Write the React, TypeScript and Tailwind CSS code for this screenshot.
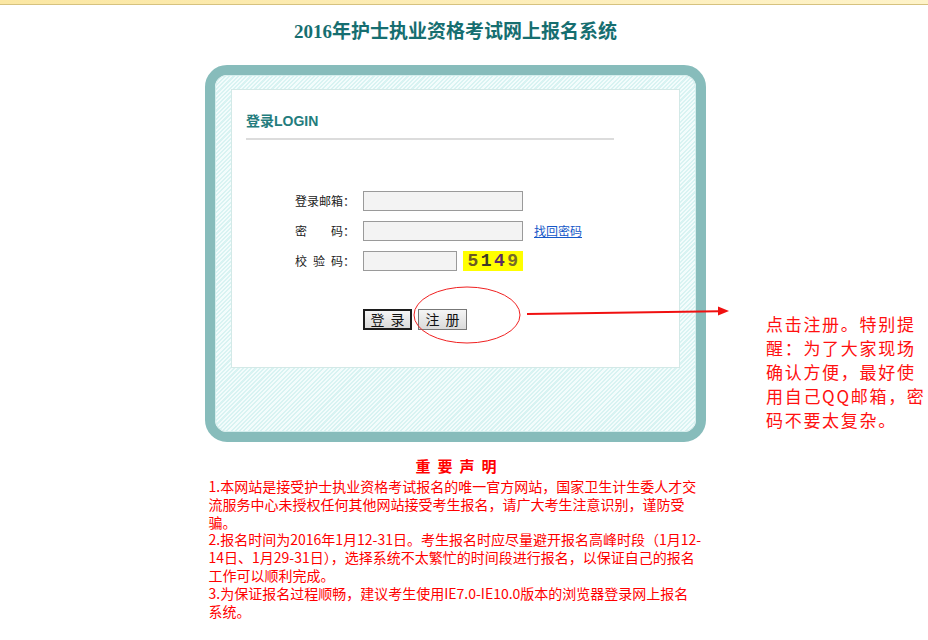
import React from "react"

const cjk = "font-['Noto_Sans_CJK_SC',sans-serif]"

function Row({ label, children }: { label: React.ReactNode; children: React.ReactNode }) {
  return (
    <div className="flex h-[20px] items-center">
      <div className="w-[68px] whitespace-pre text-[12px] leading-[20px] text-[#222]">{label}</div>
      {children}
    </div>
  )
}

function Annotation() {
  return (
    <>
      <svg className="pointer-events-none absolute left-0 top-0" width="928" height="640">
        <ellipse cx="467" cy="315" rx="53" ry="28" fill="none" stroke="#f02020" strokeWidth="1" />
        <line x1="527" y1="314" x2="719" y2="311.2" stroke="#f01010" strokeWidth="2" />
        <polygon points="718,306.5 729,311 718,315.5" fill="#f01010" />
      </svg>
      <div
        className={`absolute left-[766px] top-[312px] whitespace-nowrap text-[17px] leading-[24px] tracking-[1.7px] text-[#ff1010] ${cjk}`}
      >
        点击注册。特别提
        <br />
        醒：为了大家现场
        <br />
        确认方便，最好使
        <br />
        用自己QQ邮箱，密
        <br />
        码不要太复杂。
      </div>
    </>
  )
}

export default function App() {
  return (
    <div className={`relative min-h-[640px] w-[928px] overflow-hidden bg-white ${cjk}`}>
      <div className="h-[5px] border-b border-[#d6c27f] bg-[linear-gradient(90deg,#fbe7a3,#fdeebb_60%,#fef3c9)]" />

      <div className="flex w-[911px] flex-col items-center">
        <h1 className="mt-[13px] text-[19px] font-bold leading-[28px] text-[#166e70] font-['Liberation_Serif','Noto_Sans_CJK_SC',serif]">
          2016年护士执业资格考试网上报名系统
        </h1>

        {/* login panel */}
        <div className="mt-[19px] w-[501px] rounded-[22px] border-[10px] border-[#87bcbb]">
          <div className="rounded-[12px] border border-[#d4eeed] bg-[repeating-linear-gradient(135deg,#d8f3f2_0px,#d8f3f2_1.5px,#f3fcfc_1.5px,#f3fcfc_3px)] px-[15px] pb-[63px] pt-[13px]">
            <div className="h-[279px] border border-[#d3e9e7] bg-white">
              <div className="pl-[14px] pt-[20px]">
                <div className="text-[14px] font-bold leading-[20px] text-[#237c7d]">
                  登录<span className="font-['Liberation_Sans',sans-serif]">LOGIN</span>
                </div>
                <div className="mt-[7px] h-[2px] w-[368px] bg-[#dcdcdc]" />
              </div>

              <div className="mt-[51px] flex flex-col gap-[10px] pl-[63px]">
                <Row label="登录邮箱：">
                  <input className="h-[20px] w-[160px] border border-[#9a9a9a] bg-[#f3f3f3] outline-none" />
                </Row>
                <Row label="密　　码：">
                  <input type="password" className="h-[20px] w-[160px] border border-[#9a9a9a] bg-[#f3f3f3] outline-none" />
                  <a href="#" className="ml-[11px] text-[12px] leading-[20px] text-[#1558c8] underline">
                    找回密码
                  </a>
                </Row>
                <Row
                  label={
                    <>
                      <span className="mr-[6px]">校</span>
                      <span className="mr-[6px]">验</span>码：
                    </>
                  }
                >
                  <input className="h-[20px] w-[94px] border border-[#9a9a9a] bg-[#f3f3f3] outline-none" />
                  <div className="ml-[6px] flex h-[20px] w-[60px] items-center justify-center bg-[#ffff00] pl-[2px] text-[18px] font-bold tracking-[2.4px] font-['Liberation_Mono',monospace]">
                    <span className="text-[#6b5a24]">5</span>
                    <span className="text-[#3d3a26]">1</span>
                    <span className="text-[#5b2d66]">4</span>
                    <span className="text-[#756a2a]">9</span>
                  </div>
                </Row>
              </div>

              <div className="mt-[38px] flex gap-[6px] pl-[131px]">
                <button className="flex h-[21px] w-[49px] items-center justify-center gap-[6px] whitespace-nowrap border-2 border-[#1c1c1c] bg-[linear-gradient(#f5f5f5,#dadada)] text-[14px] leading-[15px] text-[#111]">
                  <span>登</span>
                  <span>录</span>
                </button>
                <button className="flex h-[21px] w-[49px] items-center justify-center gap-[6px] whitespace-nowrap border border-[#777] bg-[linear-gradient(#f5f5f5,#dadada)] text-[14px] leading-[17px] text-[#111]">
                  <span>注</span>
                  <span>册</span>
                </button>
              </div>
            </div>
          </div>
        </div>

        {/* notice */}
        <div className="mt-[15px] w-[494px] text-[#ff0000]">
          <div className="pl-[8px] text-center text-[15px] font-bold leading-[18px] tracking-[7px]">重要声明</div>
          <div className="mt-[3px] whitespace-nowrap text-[14px] leading-[17.8px]">
            1.本网站是接受护士执业资格考试报名的唯一官方网站，国家卫生计生委人才交
            <br />
            流服务中心未授权任何其他网站接受考生报名，请广大考生注意识别，谨防受
            <br />
            骗。
            <br />
            2.报名时间为2016年1月12-31日。考生报名时应尽量避开报名高峰时段（1月12-
            <br />
            14日、1月29-31日），选择系统不太繁忙的时间段进行报名，以保证自己的报名
            <br />
            工作可以顺利完成。
            <br />
            3.为保证报名过程顺畅，建议考生使用IE7.0-IE10.0版本的浏览器登录网上报名
            <br />
            系统。
          </div>
        </div>
      </div>

      <Annotation />
    </div>
  )
}
